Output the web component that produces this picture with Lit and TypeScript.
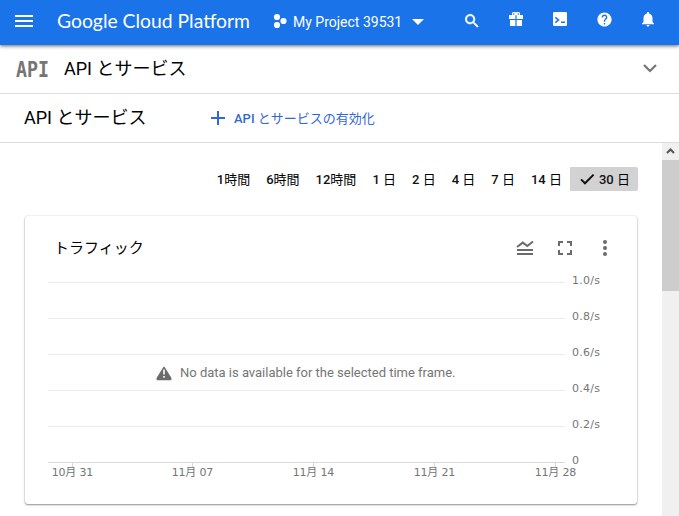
import { LitElement, html, svg, css } from "lit";
import { customElement, property } from "lit/decorators.js";
import { classMap } from "lit/directives/class-map.js";

// Leading latin part is set in medium weight, the Japanese part in regular.
const RANGES: [string, string][] = [
  ["1", "時間"], ["6", "時間"], ["12", "時間"], ["1 ", "日"], ["2 ", "日"],
  ["4 ", "日"], ["7 ", "日"], ["14 ", "日"], ["30 ", "日"],
];

@customElement("console-header")
class ConsoleHeader extends LitElement {
  static styles = css`
    :host { display: flex; height: 45px; flex: none; background: #1a73e8; color: #fff; position: relative; z-index: 1;
      box-shadow: 0 1px 3px rgba(0, 0, 0, 0.45), 0 2px 4px rgba(0, 0, 0, 0.15); }
    svg { display: block; fill: currentColor; }
    .menu { margin: 15px 0 0 15px; }
    .brand { margin: 4px 0 0 24px; overflow: visible; }
    .brand text { font: 19.5px Lato, sans-serif; }
    .project { display: flex; align-items: flex-start; margin-left: 23px; width: 177px; }
    .dots { margin-top: 13px; }
    .name { font: 14px/20px Roboto, sans-serif; margin: 12px 0 0 6px; white-space: nowrap; width: 110px; }
    .caret { margin: 19px 0 0 9px; }
    .actions { display: flex; height: 38px; }
    .cell { width: 44px; display: flex; align-items: center; justify-content: center; }
    .search { padding-top: 3px; }
  `;
  render() {
    return html`
      <svg class="menu" width="18" height="12"><path d="M0 0h18v2H0zM0 5h18v2H0zM0 10h18v2H0z" /></svg>
      <svg class="brand" width="193" height="36">
        <text x="0" y="24" textLength="193" lengthAdjust="spacingAndGlyphs">Google Cloud Platform</text>
      </svg>
      <div class="project">
        <svg class="dots" width="14" height="16">
          <circle cx="4" cy="4" r="3.1" /><circle cx="4" cy="12" r="3.1" /><circle cx="10.5" cy="8" r="3.1" />
        </svg>
        <span class="name">My Project 39531</span>
        <svg class="caret" width="12" height="6"><path d="M0 0h12L6 6z" /></svg>
      </div>
      <div class="actions">
        <div class="cell search"><svg width="18" height="18" viewBox="0 0 24 24"><path stroke="#fff" stroke-width=".7" d="M15.5 14h-.79l-.28-.27C15.41 12.59 16 11.11 16 9.5 16 5.91 13.09 3 9.5 3S3 5.91 3 9.5 5.91 16 9.5 16c1.61 0 3.09-.59 4.23-1.57l.27.28v.79l5 4.99L20.49 19l-4.99-5zm-6 0C7.01 14 5 11.99 5 9.5S7.01 5 9.5 5 14 7.01 14 9.5 11.99 14 9.5 14z" /></svg></div>
        <div class="cell"><svg width="14" height="14">
          <path fill-rule="evenodd" d="M0 3h3.2a2.2 2.2 0 0 1 3.8-2.2A2.2 2.2 0 0 1 10.8 3H14v4H7.6V3.2H6.4V7H0zM4.8 1.2a.8.8 0 1 0 0 1.6.8.8 0 0 0 0-1.6zM9.2 1.2a.8.8 0 1 0 0 1.6.8.8 0 0 0 0-1.6z" />
          <path d="M1 8h5.4v6H1zM7.6 8H13v6H7.6z" /></svg></div>
        <div class="cell"><svg width="14" height="14">
          <rect width="14" height="14" rx="1.2" />
          <path d="M2.3 5.3L5.5 8 2.3 10.7M8 10.2h4" fill="none" stroke="#1a73e8" stroke-width="1.6" /></svg></div>
        <div class="cell"><svg width="17" height="17" viewBox="0 0 24 24"><path d="M12 2C6.48 2 2 6.48 2 12s4.48 10 10 10 10-4.48 10-10S17.52 2 12 2zm1 17h-2v-2h2v2zm2.07-7.75l-.9.92C13.45 12.9 13 13.5 13 15h-2v-.5c0-1.1.45-2.1 1.17-2.83l1.24-1.26c.37-.36.59-.86.59-1.41 0-1.1-.9-2-2-2s-2 .9-2 2H8c0-2.21 1.79-4 4-4s4 1.79 4 4c0 .88-.36 1.68-.93 2.25z" /></svg></div>
        <div class="cell"><svg width="18" height="18" viewBox="0 0 24 24"><path d="M12 22c1.1 0 2-.9 2-2h-4c0 1.1.89 2 2 2zm6-6v-5c0-3.07-1.64-5.64-4.5-6.32V4c0-.83-.67-1.5-1.5-1.5s-1.5.67-1.5 1.5v.68C7.63 5.36 6 7.92 6 11v5l-2 2v1h16v-1l-2-2z" /></svg></div>
      </div>`;
  }
}

@customElement("range-picker")
class RangePicker extends LitElement {
  @property() selected = "30 ";
  static styles = css`
    :host { display: flex; justify-content: flex-end; height: 24px; margin-right: -1px; }
    .item { display: flex; align-items: center; padding: 0 8px; color: #111; white-space: pre;
      font: 500 13px/24px Roboto, "Noto Sans CJK JP", sans-serif; }
    .label { padding-top: 2px; }
    .ja { font-weight: 400; color: #000; }
    .active { background: #d2d2d2; border-radius: 0 2px 2px 0; padding: 0 8px 0 10px; }
    .check { margin-right: 4px; }
  `;
  render() {
    return RANGES.map(([num, unit]) => {
      const active = num === this.selected;
      return html`<span class=${classMap({ item: true, active })}>${active
        ? html`<svg class="check" width="15" height="12"><path d="M1 6.400L5 10.300 13.600 1.600" fill="none" stroke="#111" stroke-width="2" /></svg>`
        : ""}<span class="label">${num}<span class="ja">${unit}</span></span></span>`;
    });
  }
}

@customElement("traffic-card")
class TrafficCard extends LitElement {
  static styles = css`
    :host { display: flex; flex-direction: column; height: 288px; background: #fff; border-radius: 3px;
      box-shadow: 0 1px 2px rgba(0, 0, 0, 0.42), 0 0 2px rgba(0, 0, 0, 0.14); }
    .head { display: flex; align-items: center; height: 64px; padding: 0 22px 0 29px; box-sizing: border-box; flex: none; }
    .title { flex: 1; font: 15px/24px Roboto, "Noto Sans CJK JP", sans-serif; color: #000; }
    .tools { display: flex; }
    .tool { width: 40px; display: flex; justify-content: center; align-items: center; }
    .tool:last-child { margin-right: -10px; }
    svg { display: block; overflow: visible; }
    text { font: 11px "DejaVu Sans", "Noto Sans CJK JP", sans-serif; fill: #757575; }
    .notice { font: 13px Roboto, sans-serif; }
  `;
  render() {
    const values = ["1.0/s", "0.8/s", "0.6/s", "0.4/s", "0.2/s", "0"];
    const dates = ["10月 31", "11月 07", "11月 14", "11月 21", "11月 28"];
    const ticks = [47.5, 167.5, 288.5, 409.5, 530.5];
    return html`
      <div class="head">
        <span class="title">トラフィック</span>
        <div class="tools">
          <span class="tool"><svg width="16" height="16"><path d="M0 7L5.800 2.600 10.300 6 16 1.500M0 10H16M0 14H16" fill="none" stroke="#6b6b6b" stroke-width="2" /></svg></span>
          <span class="tool"><svg width="14" height="14"><path d="M1 5V1H5M9 1h4V5M13 9v4H9M5 13H1V9" fill="none" stroke="#6b6b6b" stroke-width="2" /></svg></span>
          <span class="tool"><svg width="4" height="16" fill="#6b6b6b"><circle cx="2" cy="2" r="2" /><circle cx="2" cy="8" r="2" /><circle cx="2" cy="14" r="2" /></svg></span>
        </div>
      </div>
      <svg width="612" height="224">
        ${values.map((v, i) => svg`
          <path d=${`M23 ${2.5 + i * 36}H540`} stroke=${i === 5 ? "#d9d9d9" : "#ebebeb"} />
          <text x="547" y=${4 + i * 36} textLength=${v === "0" ? 7 : 28}>${v}</text>`)}
        ${dates.map((d, i) => svg`
          <path d=${`M${ticks[i]} 183v4`} stroke="#d9d9d9" />
          <text x=${ticks[i]} y="196" text-anchor="middle" textLength="41.5">${d}</text>`)}
        <path d="M139 87.500L132.500 98Q131.500 99.500 133 99.500H145Q146.500 99.500 145.500 98z" fill="#6b6b6b" stroke="#6b6b6b" stroke-width="1.500" stroke-linejoin="round" />
        <path d="M138.200 89.500h1.600v5h-1.600zM138.200 96h1.600v1.800h-1.600z" fill="#fff" />
        <text class="notice" x="155" y="97" textLength="275.500">No data is available for the selected time frame.</text>
      </svg>`;
  }
}

@customElement("app-root")
class AppRoot extends LitElement {
  static styles = css`
    :host { display: flex; flex-direction: column; width: 679px; height: 516px; overflow: hidden; background: #fff;
      font-family: Roboto, "Noto Sans CJK JP", sans-serif; }
    .bar { display: flex; align-items: center; height: 49px; box-sizing: border-box; border-bottom: 1px solid #dcdcdc; flex: none; }
    .product { padding: 0 22px 0 16px; }
    .heading { font-size: 18px; line-height: 26px; color: #000; white-space: nowrap; }
    .ja { font-weight: 400; }
    .product .heading { flex: 1; margin-left: 16px; }
    .page { padding-left: 24px; }
    .page .heading { width: 187px; }
    .enable { display: flex; align-items: center; gap: 9px; color: #3367d6; font-size: 13px; font-weight: 500; line-height: 20px; white-space: nowrap; }
    .caption { padding-top: 1px; }
    .mark { overflow: visible; }
    .logo { font: bold 22px "DejaVu Sans Mono", monospace; fill: #757575; }
    .body { display: flex; flex: 1; min-height: 0; }
    .content { flex: 1; padding: 24px 25px 0 25px; display: flex; flex-direction: column; gap: 25px; }
    .scroll { width: 17px; background: #f0f0f0; }
    .up { display: block; }
    .thumb { height: 131px; background: #cdcdcd; }
  `;
  render() {
    return html`
      <console-header></console-header>
      <div class="bar product">
        <svg class="mark" width="32" height="20"><text class="logo" x="0" y="18" textLength="33" lengthAdjust="spacingAndGlyphs">API</text></svg>
        <span class="heading">API とサービス</span>
        <svg width="14" height="10"><path d="M1 1L7 7 13 1" fill="none" stroke="#757575" stroke-width="2.200" /></svg>
      </div>
      <div class="bar page">
        <span class="heading">API とサービス</span>
        <div class="enable">
          <svg width="14" height="14"><path d="M7 0V14M0 7H14" stroke="#3367d6" stroke-width="2" /></svg>
          <span class="caption">API <span class="ja">とサービスの有効化</span></span>
        </div>
      </div>
      <div class="body">
        <div class="content">
          <range-picker></range-picker>
          <traffic-card></traffic-card>
        </div>
        <div class="scroll">
          <svg class="up" width="17" height="17"><path d="M5 10L8.500 6.500 12 10" fill="none" stroke="#555" stroke-width="2" /></svg>
          <div class="thumb"></div>
        </div>
      </div>`;
  }
}
